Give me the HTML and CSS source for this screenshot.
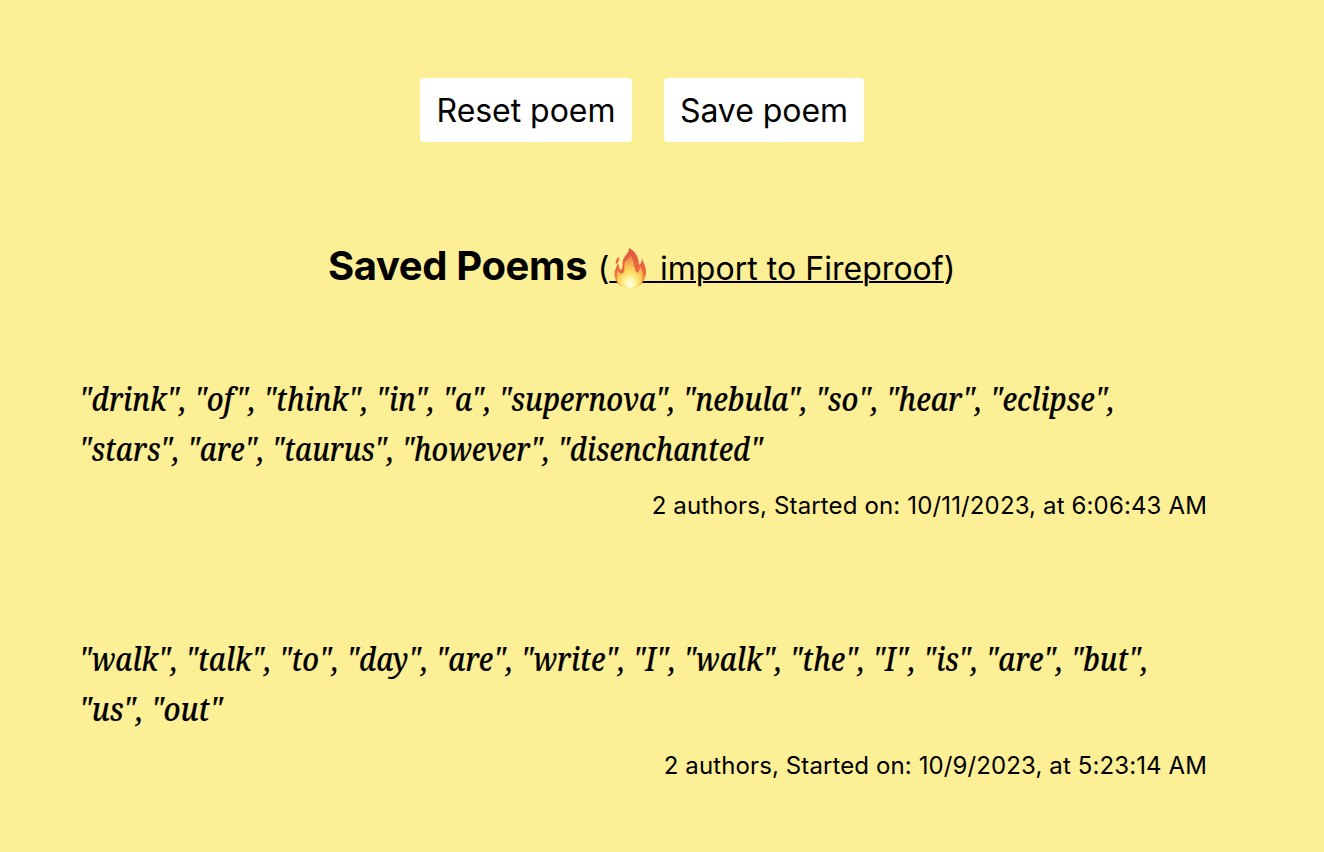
FILE: index.html
```html
<!DOCTYPE html>
<html lang="en">
<head>
<meta charset="utf-8">
<title>Saved Poems</title>
<link rel="stylesheet" href="styles.css">
</head>
<body>
<main class="page">
  <div class="actions">
    <button class="btn btn-reset"><span>Reset poem</span></button>
    <button class="btn btn-save"><span>Save poem</span></button>
  </div>
  <header class="heading">
    <h2 class="title">Saved Poems</h2>
    <p class="import">(<a class="import-link" href="#"><span class="flame-space">&nbsp;</span>import to Fireproof<svg class="flame" viewBox="0 0 36 42"><defs><linearGradient id="outer" x1="0" y1="0" x2="0" y2="1"><stop offset="0" stop-color="#df5843"/><stop offset=".6" stop-color="#ee6840"/><stop offset="1" stop-color="#f9b747"/></linearGradient><radialGradient id="inner" cx=".5" cy=".88" r=".8"><stop offset="0" stop-color="#fffef0"/><stop offset=".25" stop-color="#fff49b"/><stop offset=".55" stop-color="#fcd258"/><stop offset="1" stop-color="#f08b4c"/></radialGradient></defs><path fill="url(#outer)" d="M17 1C23 4 27 10 27 18C29 17 30 14 30 11C31 16 34 18 34 25C34 34 28 41 18 41C8 41 2 35 2.500 26C3 22 5 19 6 16C7 19 7 22 9 23C12 20 9 16 12 11C14 7 17 6 17 1Z"/><path fill="#eb6b43" d="M7 10C8 13 6 16 4 17C3 14 4 12 7 10Z"/><path fill="url(#inner)" d="M18 8C22 12 21 18 23 21C23 23 24 25 25 26C27 25 28 22 28 19C31 24 32 30 29 35C27 39 22 41 18 41C9 41 4 35 5 28C5 26 6 24 6 22C7 26 8 28 11 26C14 24 11 20 13 15C15 12 18 12 18 8Z"/></svg></a>)</p>
  </header>
  <article class="poem">
    <p class="words"><span class="line l1">"drink", "of", "think", "in", "a", "supernova", "nebula", "so", "hear", "eclipse",</span><span class="line l2">"stars", "are", "taurus", "however", "disenchanted"</span></p>
    <p class="meta m1">2 authors, Started on: 10/11/2023, at 6:06:43 AM</p>
  </article>
  <article class="poem">
    <p class="words"><span class="line l3">"walk", "talk", "to", "day", "are", "write", "I", "walk", "the", "I", "is", "are", "but",</span><span class="line l4">"us", "out"</span></p>
    <p class="meta m2">2 authors, Started on: 10/9/2023, at 5:23:14 AM</p>
  </article>
</main>
</body>
</html>
```
FILE: styles.css
```css
* { box-sizing: border-box; }
body { margin: 0; background: #fcef96; color: #000; font-family: Inter, sans-serif; }
p, h2 { margin: 0; }
.page { height: 852px; padding: 78px 117px 0 80px; overflow: hidden; }
.actions { display: flex; gap: 32px; padding-left: 340px; }
.btn { height: 64px; padding: 2px 0 0; border: 0; border-radius: 4px; background: #fff; color: #000; font: 32px/62px Inter, sans-serif; white-space: nowrap; letter-spacing: -.04px; }
.btn-reset { width: 212px; }
.btn-save { width: 200px; }
.heading { display: flex; align-items: baseline; gap: 10.5px; height: 56px; margin-top: 96px; padding-left: 248px; white-space: nowrap; }
.title { font-size: 40px; line-height: 56px; font-weight: 700; letter-spacing: -.38px; }
.import { font-size: 32px; line-height: 50px; }
.import-link { position: relative; color: inherit; text-decoration: underline; text-decoration-thickness: 2px; letter-spacing: .04px; }
.flame-space { word-spacing: 41.5px; }
.flame { position: absolute; left: 2.5px; top: -2px; width: 36px; height: 42px; }
.poem { height: 260px; padding-top: 80px; }
.words { height: 100px; margin-left: -1.5px; font: italic 500 32px/50px "Noto Serif", "Noto Sans", serif; }
.line { display: block; white-space: nowrap; width: max-content; transform-origin: left; -webkit-text-stroke: .2px; }
.l1 { transform: scaleX(.899); }
.l2 { transform: scaleX(.888); }
.l3 { transform: scaleX(.892); }
.l4 { transform: scaleX(.908); }
.meta { margin-top: 16px; font-size: 24px; line-height: 32px; text-align: right; white-space: nowrap; letter-spacing: .14px; }
.m2 { letter-spacing: .11px; }
```
